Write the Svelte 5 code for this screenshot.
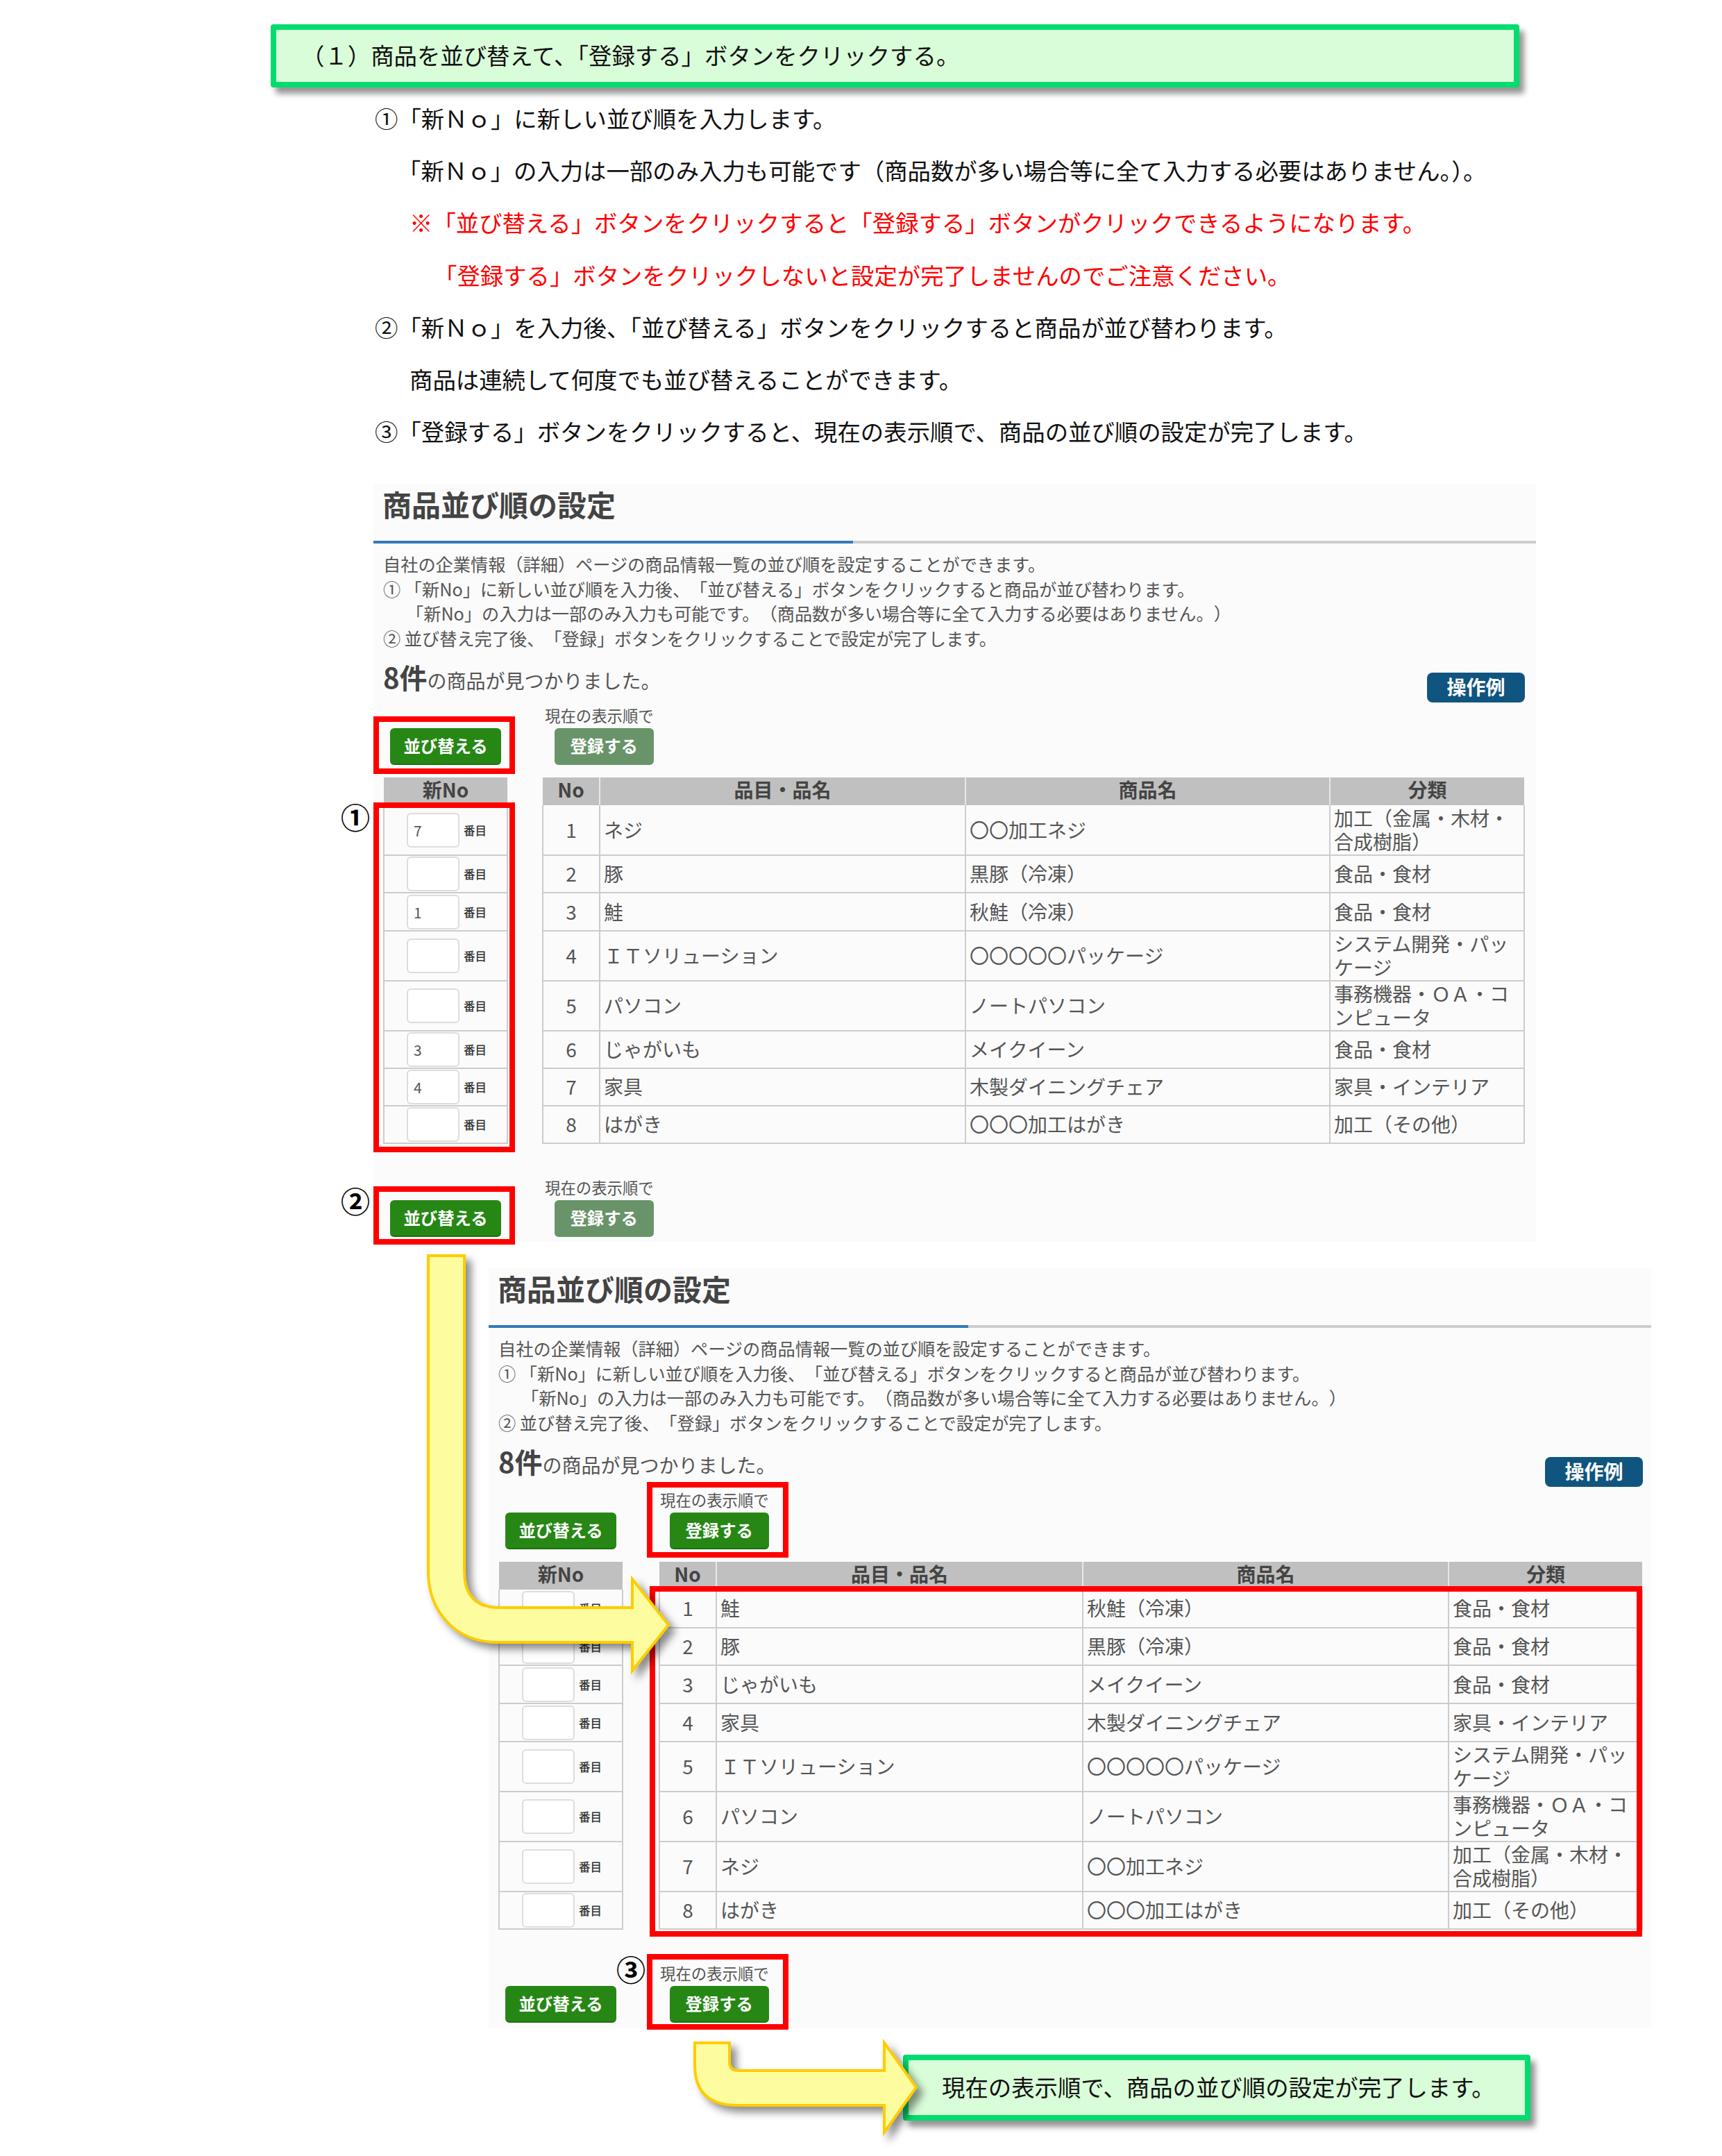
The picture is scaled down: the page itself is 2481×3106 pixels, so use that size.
<script>
	const first = [
		{ val: '7', no: 1, item: 'ネジ', name: '〇〇加工ネジ', cat: '加工（金属・木材・合成樹脂）', h: 72 },
		{ val: '', no: 2, item: '豚', name: '黒豚（冷凍）', cat: '食品・食材', h: 54 },
		{ val: '1', no: 3, item: '鮭', name: '秋鮭（冷凍）', cat: '食品・食材', h: 55 },
		{ val: '', no: 4, item: 'ＩＴソリューション', name: '〇〇〇〇〇パッケージ', cat: 'システム開発・パッケージ', h: 72 },
		{ val: '', no: 5, item: 'パソコン', name: 'ノートパソコン', cat: '事務機器・ＯＡ・コンピュータ', h: 72 },
		{ val: '3', no: 6, item: 'じゃがいも', name: 'メイクイーン', cat: '食品・食材', h: 54 },
		{ val: '4', no: 7, item: '家具', name: '木製ダイニングチェア', cat: '家具・インテリア', h: 54 },
		{ val: '', no: 8, item: 'はがき', name: '〇〇〇加工はがき', cat: '加工（その他）', h: 54 }
	]

	const second = [
		{ val: '', no: 1, item: '鮭', name: '秋鮭（冷凍）', cat: '食品・食材', h: 55 },
		{ val: '', no: 2, item: '豚', name: '黒豚（冷凍）', cat: '食品・食材', h: 54 },
		{ val: '', no: 3, item: 'じゃがいも', name: 'メイクイーン', cat: '食品・食材', h: 55 },
		{ val: '', no: 4, item: '家具', name: '木製ダイニングチェア', cat: '家具・インテリア', h: 55 },
		{ val: '', no: 5, item: 'ＩＴソリューション', name: '〇〇〇〇〇パッケージ', cat: 'システム開発・パッケージ', h: 72 },
		{ val: '', no: 6, item: 'パソコン', name: 'ノートパソコン', cat: '事務機器・ＯＡ・コンピュータ', h: 72 },
		{ val: '', no: 7, item: 'ネジ', name: '〇〇加工ネジ', cat: '加工（金属・木材・合成樹脂）', h: 72 },
		{ val: '', no: 8, item: 'はがき', name: '〇〇〇加工はがき', cat: '加工（その他）', h: 54 }
	]
</script>

{#snippet actions(enabled)}
	<div class="actions">
		<button class="btn sort">並び替える</button>
		<div class="register">
			<span class="hint">現在の表示順で</span>
			<button class="btn save" class:off={!enabled}>登録する</button>
		</div>
	</div>
{/snippet}

{#snippet panel(rows, enabled)}
	<div class="head"><h2>商品並び順の設定</h2></div>
	<div class="rule"><div class="rule-blue"></div></div>
	<div class="body">
		<div class="desc">
			<p>自社の企業情報（詳細）ページの商品情報一覧の並び順を設定することができます。</p>
			<p>① 「新No」に新しい並び順を入力後、「並び替える」ボタンをクリックすると商品が並び替わります。</p>
			<p class="indent">「新No」の入力は一部のみ入力も可能です。（商品数が多い場合等に全て入力する必要はありません。）</p>
			<p>② 並び替え完了後、「登録」ボタンをクリックすることで設定が完了します。</p>
		</div>
		<div class="count-row">
			<div class="count"><b>8件</b>の商品が見つかりました。</div>
			<button class="example">操作例</button>
		</div>
		{@render actions(enabled)}
		<div class="tables">
			<table class="new-no">
				<thead><tr><th>新No</th></tr></thead>
				<tbody>
					{#each rows as row}
						<tr style="height: {row.h}px">
							<td>
								<div class="order">
									<input type="text" value={row.val} readonly />
									<span>番目</span>
								</div>
							</td>
						</tr>
					{/each}
				</tbody>
			</table>
			<table class="list">
				<colgroup>
					<col class="c-no" /><col class="c-item" /><col class="c-name" /><col class="c-cat" />
				</colgroup>
				<thead>
					<tr><th>No</th><th>品目・品名</th><th>商品名</th><th>分類</th></tr>
				</thead>
				<tbody>
					{#each rows as row}
						<tr style="height: {row.h}px">
							<td class="num">{row.no}</td>
							<td>{row.item}</td>
							<td>{row.name}</td>
							<td>{row.cat}</td>
						</tr>
					{/each}
				</tbody>
			</table>
		</div>
		<div class="bottom">
			{@render actions(enabled)}
		</div>
	</div>
{/snippet}

<div class="page">
	<div class="banner top">（１）商品を並び替えて、「登録する」ボタンをクリックする。</div>

	<div class="steps">
		<p>①「新Ｎｏ」に新しい並び順を入力します。</p>
		<p class="cont">「新Ｎｏ」の入力は一部のみ入力も可能です（商品数が多い場合等に全て入力する必要はありません。）。</p>
		<p class="note">※「並び替える」ボタンをクリックすると「登録する」ボタンがクリックできるようになります。</p>
		<p class="note second">「登録する」ボタンをクリックしないと設定が完了しませんのでご注意ください。</p>
		<p>②「新Ｎｏ」を入力後、「並び替える」ボタンをクリックすると商品が並び替わります。</p>
		<p class="plain">商品は連続して何度でも並び替えることができます。</p>
		<p>③「登録する」ボタンをクリックすると、現在の表示順で、商品の並び順の設定が完了します。</p>
	</div>

	<section class="panel one">
		{@render panel(first, false)}
		<div class="mark m-sort"></div>
		<div class="mark m-inputs"></div>
		<div class="mark m-sort2"></div>
		<span class="circled c1">①</span>
		<span class="circled c2">②</span>
	</section>

	<section class="panel two">
		{@render panel(second, true)}
		<div class="mark m-save"></div>
		<div class="mark m-table"></div>
		<div class="mark m-save2"></div>
		<span class="circled c3">③</span>
	</section>

	<div class="banner end">現在の表示順で、商品の並び順の設定が完了します。</div>

	<svg class="arrows" width="2481" height="3106" viewBox="0 0 2481 3106">
		<path d="M617 1809 L669 1809 L669 2264 Q669 2316 720 2316 L911 2316 L911 2275 L963 2341 L911 2407 L911 2366 L717 2366 C655 2366 617 2320 617 2264 Z" />
		<path d="M1001 2943 L1051 2943 L1051 2970 Q1051 2983 1063 2983 L1274 2983 L1274 2943 L1320 3007 L1274 3072 L1274 3033 L1062 3033 Q1001 3033 1001 2975 Z" />
	</svg>
</div>

<style>
	:global(body) {
		margin: 0;
		background: #fff;
	}

	.page {
		position: relative;
		width: 2481px;
		height: 3106px;
		padding-top: 35px;
		box-sizing: border-box;
		overflow: hidden;
		font-family: "Noto Sans CJK JP", "Noto Sans", sans-serif;
		color: #111;
	}

	p {
		margin: 0;
	}

	.banner {
		box-sizing: border-box;
		display: flex;
		align-items: center;
		background: #d9fdd9;
		border: 8px solid #00dc6e;
		border-radius: 4px;
		box-shadow: 7px 9px 8px rgba(0, 0, 0, 0.42);
		font-size: 33.4px;
		padding-bottom: 4px;
	}

	.banner.top {
		margin-left: 390px;
		width: 1799px;
		height: 91px;
		padding-left: 36px;
	}

	.banner.end {
		margin: 38px 0 0 1301px;
		width: 904px;
		height: 95px;
		padding-left: 48px;
	}

	.steps {
		margin: 6px 0 39px 540px;
		font-size: 33.4px;
		line-height: 75.2px;
	}

	.steps .cont {
		padding-left: 33px;
	}

	.steps .plain {
		padding-left: 50px;
	}

	.steps .note {
		padding-left: 50px;
		color: #f00;
	}

	.steps .note.second {
		padding-left: 85px;
	}

	.panel {
		position: relative;
		box-sizing: border-box;
		width: 1675px;
		background: #fbfbfb;
		color: #555;
		text-spacing-trim: space-all;
	}

	.panel.one {
		margin-left: 538px;
		height: 1092px;
	}

	.panel.two {
		margin: 38px 0 0 704px;
		height: 1095px;
	}

	.head {
		height: 82px;
		padding-left: 13px;
		box-sizing: border-box;
	}

	h2 {
		margin: 0;
		font-size: 42px;
		line-height: 58px;
		font-weight: 700;
		color: #444;
	}

	.rule {
		height: 4px;
		background: #ccc;
	}

	.rule-blue {
		width: 691px;
		height: 100%;
		background: #337ab7;
	}

	.body {
		padding: 12px 17px 0 14px;
	}

	.desc {
		font-size: 25.2px;
		line-height: 35.4px;
	}

	.desc .indent {
		padding-left: 33px;
	}

	.count-row {
		display: flex;
		justify-content: space-between;
		align-items: flex-start;
		height: 64px;
		margin-top: 16px;
	}

	.count {
		font-size: 28px;
		line-height: 44px;
	}

	.count b {
		font-size: 40px;
		color: #444;
	}

	.example {
		margin: 16px -1px 0 0;
		width: 141px;
		height: 43px;
		padding: 0 0 3px;
		border: none;
		border-radius: 8px;
		background: #10557f;
		color: #fff;
		font: 700 28px "Noto Sans CJK JP", sans-serif;
	}

	.two .example {
		margin-right: -5px;
	}

	.actions {
		display: flex;
		align-items: flex-end;
		gap: 63px;
		padding-left: 10px;
	}

	.register {
		display: flex;
		flex-direction: column;
		align-items: flex-end;
		gap: 6px;
	}

	.hint {
		font-size: 22.4px;
		line-height: 26px;
	}

	.btn {
		height: 53px;
		padding: 0 0 3px;
		border: none;
		border-bottom: 2px solid #1f6f10;
		border-radius: 6px;
		background: #268715;
		color: #fff;
		font: 700 24.4px "Noto Sans CJK JP", sans-serif;
	}

	.sort {
		width: 160px;
	}

	.save {
		width: 143px;
	}

	.save.off {
		background: #69946a;
		border-bottom-color: #69946a;
	}

	.tables {
		display: flex;
		gap: 49px;
		margin-top: 18px;
	}

	.two .tables {
		gap: 51px;
	}

	.bottom {
		margin-top: 49px;
	}

	table {
		flex: none;
		border-collapse: collapse;
		table-layout: fixed;
		font-size: 28px;
		line-height: 34px;
	}

	th {
		height: 35px;
		padding: 0 0 5px;
		background: #c0c0c0;
		border: none;
		border-right: 2px solid #e8e8e8;
		font-size: 28px;
		line-height: 35px;
		font-weight: 700;
		color: #444;
	}

	th:last-child {
		border-right: none;
	}

	td {
		padding: 0 5px 2px;
		border: 2px solid #ccc;
		border-top: none;
	}

	.new-no {
		width: 180px;
	}

	.new-no td {
		padding: 0;
	}

	.order {
		display: flex;
		align-items: center;
		gap: 6px;
		padding-left: 32px;
	}

	.order input {
		box-sizing: border-box;
		width: 76px;
		height: 50px;
		padding: 0 0 0 8px;
		border: 2px solid #ddd;
		border-radius: 6px;
		background: #fff;
		color: #555;
		font: 21px "Noto Sans CJK JP", sans-serif;
		outline: none;
	}

	.order span {
		font-size: 16.5px;
		line-height: 20px;
		font-weight: 500;
		color: #333;
	}

	.list {
		width: 1414px;
	}

	.two .list {
		width: 1416px;
	}

	.c-no {
		width: 82px;
	}

	.c-item {
		width: 527px;
	}

	.c-name {
		width: 525px;
	}

	.c-cat {
		width: 280px;
	}

	.two .c-item {
		width: 528px;
	}

	.two .c-name {
		width: 527px;
	}

	.two .c-cat {
		width: 279px;
	}

	.num {
		padding: 0 0 2px;
		text-align: center;
		font-size: 28px;
	}

	.mark {
		position: absolute;
		box-sizing: border-box;
		border: 8px solid #f00;
		width: 204px;
		pointer-events: none;
	}

	.m-sort {
		left: 0;
		top: 335px;
		height: 83px;
	}

	.m-inputs {
		left: 0;
		top: 459px;
		height: 504px;
	}

	.m-sort2 {
		left: 0;
		top: 1012px;
		height: 84px;
	}

	.m-save {
		left: 228px;
		top: 308px;
		height: 109px;
	}

	.m-table {
		left: 232px;
		top: 458px;
		width: 1430px;
		height: 505px;
	}

	.m-save2 {
		left: 228px;
		top: 988px;
		height: 109px;
	}

	.circled {
		position: absolute;
		width: 44px;
		text-align: center;
		font-size: 42px;
		line-height: 44px;
		font-weight: 700;
		color: #000;
	}

	.c1 {
		left: -48px;
		top: 457px;
	}

	.c2 {
		left: -48px;
		top: 1010px;
	}

	.c3 {
		left: 183px;
		top: 987px;
	}

	.arrows {
		position: absolute;
		left: 0;
		top: 0;
		pointer-events: none;
		filter: drop-shadow(8px 8px 6px rgba(0, 0, 0, 0.45));
	}

	.arrows path {
		fill: #fdfda0;
		stroke: #ffcc00;
		stroke-width: 4;
	}
</style>
